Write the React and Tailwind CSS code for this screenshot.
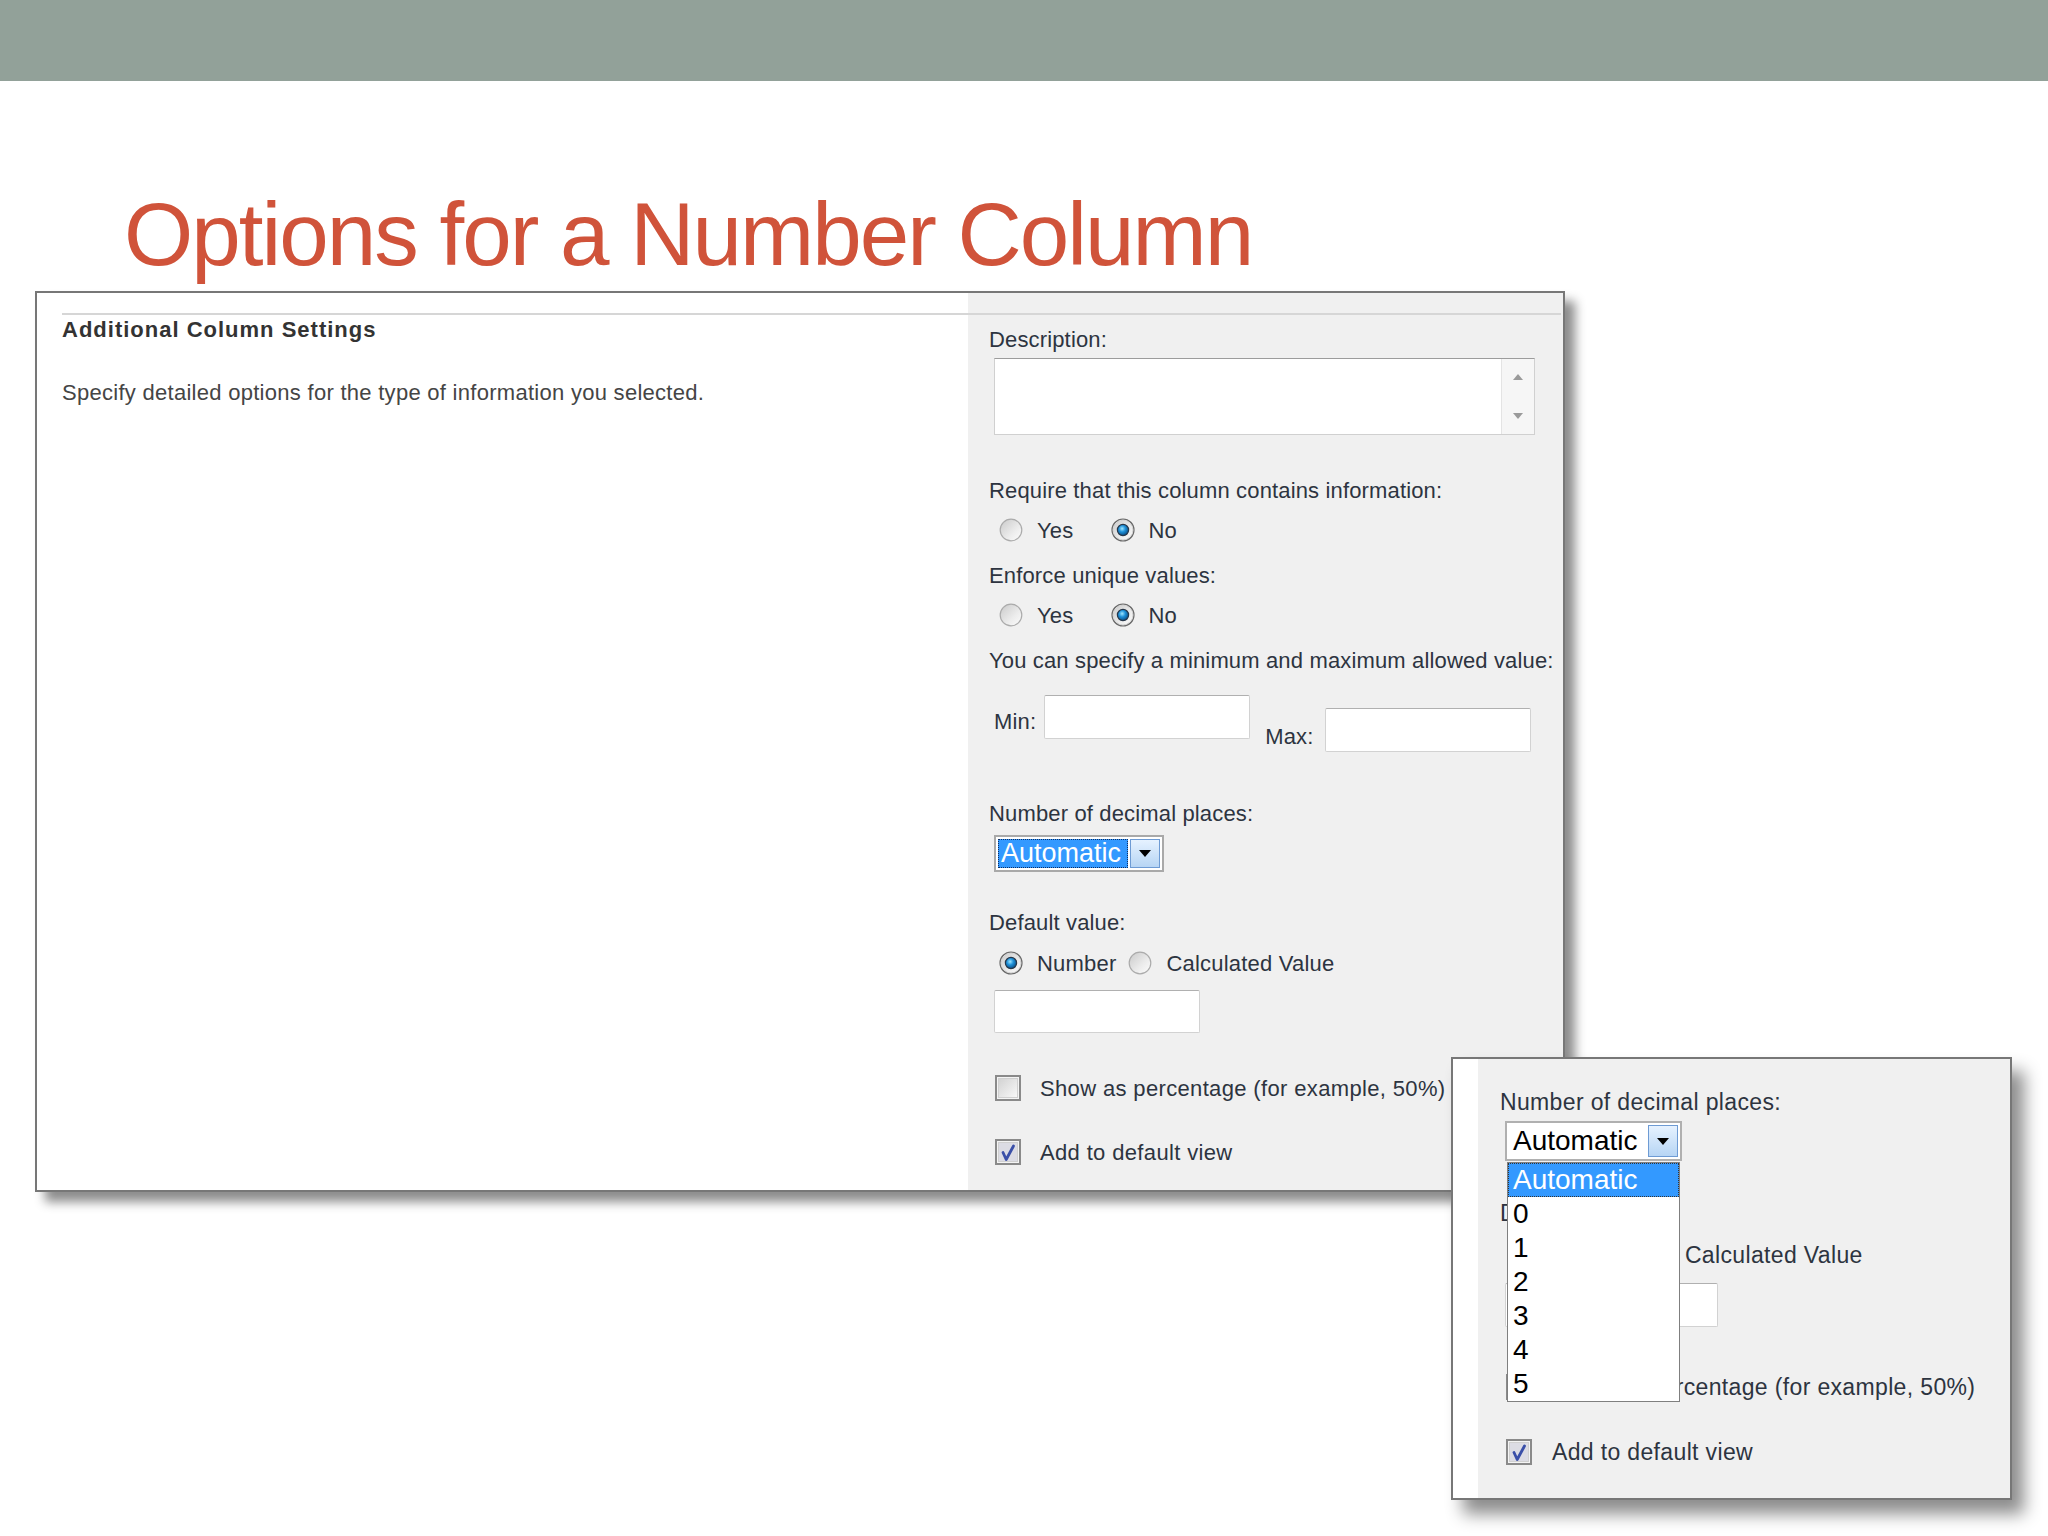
import React from "react"

function Radio({ checked }) {
  return (
    <svg width="24" height="24" viewBox="0 0 24 24" className="shrink-0">
      <defs>
        <linearGradient id="radioBg" x1="0" y1="0" x2="1" y2="1">
          <stop offset="0" stopColor="#c9c9c9" />
          <stop offset="0.6" stopColor="#ececec" />
          <stop offset="1" stopColor="#fdfdfd" />
        </linearGradient>
        <radialGradient id="radioDot" cx="0.42" cy="0.38" r="0.65">
          <stop offset="0" stopColor="#9fe6ff" />
          <stop offset="0.45" stopColor="#1e90d8" />
          <stop offset="1" stopColor="#0a4a80" />
        </radialGradient>
      </defs>
      <circle cx="12" cy="12" r="10.8" fill="url(#radioBg)" stroke={checked ? "#6a6a6a" : "#ababab"} strokeWidth={checked ? 1.6 : 1.2} />
      {checked && <circle cx="12" cy="12" r="10" fill="none" stroke="#d8d8d8" strokeWidth="1" />}
      {checked && <circle cx="12" cy="12" r="5.6" fill="url(#radioDot)" stroke="#26374a" strokeWidth="1.2" />}
    </svg>
  )
}

function Checkbox({ checked }) {
  return (
    <svg width="26" height="26" viewBox="0 0 26 26" className="shrink-0">
      <defs>
        <linearGradient id="boxBg" x1="0" y1="0" x2="1" y2="1">
          <stop offset="0" stopColor="#d2d2d2" />
          <stop offset="1" stopColor="#f9f9f9" />
        </linearGradient>
      </defs>
      <rect x="1" y="1" width="24" height="24" fill="#f4f4f4" stroke="#8a8a8a" strokeWidth="2" />
      <rect x="3.5" y="3.5" width="19" height="19" fill={checked ? "#dcdce4" : "url(#boxBg)"} stroke="#d0d0d0" strokeWidth="1" />
      {checked && <path d="M8 13.5 L11.2 20.5 L18.5 7" fill="none" stroke="#3a4fa8" strokeWidth="2.8" strokeLinejoin="round" strokeLinecap="round" />}
    </svg>
  )
}

function Input({ className = "" }) {
  return <div className={`rounded-[2px] border border-[#d2d2d2] border-t-[#b0b0b0] bg-white ${className}`} />
}

function DropButton() {
  return (
    <div className="ml-[2px] flex h-full w-[30px] items-center justify-center border border-[#6e9bd4] bg-gradient-to-b from-[#e6f2ff] to-[#b7d5f4]">
      <div className="h-0 w-0 border-x-[6px] border-t-[7px] border-x-transparent border-t-black" />
    </div>
  )
}

function Label({ children, className = "" }) {
  return <div className={`whitespace-nowrap text-[22px] leading-[26px] tracking-[0.15px] text-[#2d3440] ${className}`}>{children}</div>
}

function Option({ label, checked, className = "" }) {
  return (
    <div className={`flex items-center ${className}`}>
      <Radio checked={checked} />
      <span className="ml-[14px] whitespace-nowrap">{label}</span>
    </div>
  )
}

function CheckRow({ checked, label, className = "" }) {
  return (
    <div className={`flex h-[26px] items-center pl-[6px] text-[22px] tracking-[0.35px] text-[#2d3440] ${className}`}>
      <Checkbox checked={checked} />
      <span className="ml-[19px] whitespace-nowrap">{label}</span>
    </div>
  )
}

export default function App() {
  return (
    <div className="relative h-[1536px] w-[2048px] overflow-hidden bg-white font-['Liberation_Sans',Arial,sans-serif]">
      <div className="h-[81px] bg-[#92a199]" />
      <h1 className="ml-[124px] mt-[109px] whitespace-nowrap text-[89px] leading-[89px] tracking-[-2px] text-[#d0533a]">
        Options for a Number Column
      </h1>

      {/* main settings panel */}
      <div className="ml-[35px] mt-[12px] flex h-[901px] w-[1530px] border-2 border-[#777] shadow-[10px_10px_10px_rgba(0,0,0,0.45)]">
        <div className="w-[931px] bg-white pl-[25px] pt-[20px]">
          <div className="h-[2px] bg-[#d6d6d6]" />
          <div className="mt-[2px] text-[22px] font-bold leading-[26px] tracking-[1px] text-[#333]">
            Additional Column Settings
          </div>
          <div className="mt-[37px] text-[22px] leading-[26px] tracking-[0.28px] text-[#454545]">
            Specify detailed options for the type of information you selected.
          </div>
        </div>

        <div className="flex-1 bg-[#f0f0f0] pr-[2px] pt-[20px]">
          <div className="h-[2px] bg-[#d6d6d6]" />
          <div className="pl-[21px]">
            <Label className="mt-[12px]">Description:</Label>
            <div className="ml-[5px] mt-[5px] flex h-[77px] w-[541px] border border-[#d0d0d0] border-t-[#9c9c9c] bg-white">
              <div className="flex-1" />
              <div className="flex w-[33px] flex-col items-center justify-between border-l border-[#e4e4e4] bg-[#f6f6f6] py-[15px]">
                <div className="h-0 w-0 border-x-[5px] border-b-[6px] border-x-transparent border-b-[#9a9a9a]" />
                <div className="h-0 w-0 border-x-[5px] border-t-[6px] border-x-transparent border-t-[#9a9a9a]" />
              </div>
            </div>

            <Label className="mt-[43px]">Require that this column contains information:</Label>
            <div className="mt-[13px] flex h-[26px] items-center pl-[10px] text-[22px] tracking-[0.2px] text-[#2d3440]">
              <Option label="Yes" />
              <Option className="ml-[37px]" label="No" checked />
            </div>
            <Label className="mt-[20px]">Enforce unique values:</Label>
            <div className="mt-[13px] flex h-[26px] items-center pl-[10px] text-[22px] tracking-[0.2px] text-[#2d3440]">
              <Option label="Yes" />
              <Option className="ml-[37px]" label="No" checked />
            </div>
            <Label className="mt-[20px]">You can specify a minimum and maximum allowed value:</Label>

            <div className="mt-[21px] flex items-start pl-[5px]">
              <Label className="mt-[14px]">Min:</Label>
              <Input className="ml-[8px] h-[44px] w-[206px]" />
              <Label className="ml-[15px] mt-[29px]">Max:</Label>
              <Input className="ml-[12px] mt-[13px] h-[44px] w-[206px]" />
            </div>

            <Label className="mt-[49px]">Number of decimal places:</Label>
            <div className="ml-[5px] mt-[8px] flex h-[37px] w-[170px] border-2 border-[#a9a9a9] bg-white p-[2px]">
              <div className="flex flex-1 items-center border border-dotted border-[#0d2f66] bg-[#3399ff] pl-[2px] text-[27px] leading-none text-white">
                Automatic
              </div>
              <DropButton />
            </div>

            <Label className="mt-[38px]">Default value:</Label>
            <div className="mt-[14px] flex h-[26px] items-center pl-[10px] text-[22px] tracking-[0.2px] text-[#2d3440]">
              <Option label="Number" checked />
              <Option className="ml-[12px]" label="Calculated Value" />
            </div>
            <Input className="ml-[5px] mt-[14px] h-[43px] w-[206px]" />

            <CheckRow className="mt-[42px]" label="Show as percentage (for example, 50%)" />
            <CheckRow className="mt-[38px]" checked label="Add to default view" />
          </div>
        </div>
      </div>

      {/* zoomed dropdown callout */}
      <div className="absolute left-[1451px] top-[1057px] flex h-[443px] w-[561px] border-2 border-[#777] shadow-[12px_14px_16px_rgba(0,0,0,0.45)]">
        <div className="w-[25px] bg-white" />
        <div className="relative flex-1 bg-[#f0f0f0] pl-[22px] pt-[30px] text-[23px] tracking-[0.35px] text-[#2d3440]">
          <div className="whitespace-nowrap leading-[26px]">Number of decimal places:</div>
          <div className="ml-[5px] mt-[6px] flex h-[40px] w-[177px] border-2 border-[#b0b0b0] bg-white p-[2px] tracking-normal">
            <div className="flex flex-1 items-center pl-[4px] text-[28px] leading-none text-black">Automatic</div>
            <DropButton />
          </div>

          <div className="mt-[39px] leading-[26px]">Default value:</div>
          <div className="mt-[16px] flex h-[26px] items-center pl-[10px]">
            <Option label="Number" checked />
            <Option className="ml-[15px]" label="Calculated Value" />
          </div>
          <Input className="ml-[5px] mt-[15px] h-[44px] w-[213px]" />
          <div className="mt-[47px] flex h-[26px] items-center pl-[6px]">
            <Checkbox />
            <span className="ml-[20px] whitespace-nowrap">Show as percentage (for example, 50%)</span>
          </div>
          <div className="mt-[39px] flex h-[26px] items-center pl-[6px]">
            <Checkbox checked />
            <span className="ml-[20px] whitespace-nowrap">Add to default view</span>
          </div>

          {/* open list */}
          <div className="absolute left-[29px] top-[103px] w-[173px] border border-[#7f7f7f] bg-white text-[28px] leading-none tracking-normal text-black">
            <div className="flex h-[34px] items-center border border-dotted border-[#333] bg-[#3399ff] pl-[4px] text-white">Automatic</div>
            {["0", "1", "2", "3", "4", "5"].map((n) => (
              <div key={n} className="flex h-[34px] items-center pl-[5px]">{n}</div>
            ))}
          </div>
        </div>
      </div>
    </div>
  )
}
